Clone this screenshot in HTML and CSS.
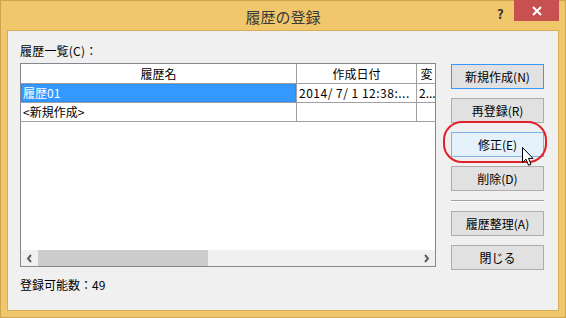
FILE: index.html
```html
<!DOCTYPE html>
<html lang="ja">
<head>
    <meta charset="UTF-8">
    <title>履歴の登録</title>
    <link rel="stylesheet" href="styles.css">
</head>
<body>
    <div class="window">
        <div class="titlebar">
            <span class="title">履歴の登録</span>
            <span class="help">?</span>
            <span class="close">
                <svg width="10" height="10" viewBox="0 0 10 10"><path d="M1 1 L9 9 M9 1 L1 9" stroke="#fff" stroke-width="2"/></svg>
            </span>
        </div>
        <div class="client">
            <div class="left">
                <div class="label">履歴一覧(C)：</div>
                <div class="listview">
                    <div class="lv-row lv-head">
                        <div class="cell">履歴名</div>
                        <div class="cell">作成日付</div>
                        <div class="cell">変</div>
                    </div>
                    <div class="lv-row selected">
                        <div class="cell"><span class="focus">履歴01</span></div>
                        <div class="cell date">2014/ 7/ 1 12:38:...</div>
                        <div class="cell">2...</div>
                    </div>
                    <div class="lv-row">
                        <div class="cell">&lt;新規作成&gt;</div>
                        <div class="cell"></div>
                        <div class="cell"></div>
                    </div>
                    <div class="lv-fill"></div>
                    <div class="hscroll">
                        <span class="arrow">
                            <svg width="7" height="9" viewBox="0 0 7 9"><path d="M5 1 L2 4.5 L5 8" fill="none" stroke="#606060" stroke-width="2"/></svg>
                        </span>
                        <div class="track"><div class="thumb"></div></div>
                        <span class="arrow">
                            <svg width="7" height="9" viewBox="0 0 7 9"><path d="M2 1 L5 4.5 L2 8" fill="none" stroke="#606060" stroke-width="2"/></svg>
                        </span>
                    </div>
                </div>
                <div class="status">登録可能数：49</div>
            </div>
            <div class="buttons">
                <button class="default">新規作成(N)</button>
                <button>再登録(R)</button>
                <button class="hover">修正(E)</button>
                <button>削除(D)</button>
                <div class="separator"></div>
                <button>履歴整理(A)</button>
                <button>閉じる</button>
            </div>
            <div class="highlight"></div>
            <svg class="cursor" width="13" height="20" viewBox="0 0 13 20">
                <path d="M0.5 0.5 L0.5 15.5 L4 12.2 L6.6 18.3 L9 17.3 L6.5 11.4 L11 11.4 Z" fill="#fff" stroke="#000" stroke-width="1"/>
            </svg>
        </div>
    </div>
</body>
</html>
```

FILE: styles.css
```css
body {
    margin: 0;
    font-family: "Noto Sans CJK JP", "Noto Sans", sans-serif;
    font-size: 12px;
    color: #000;
}
.window {
    width: 566px;
    height: 318px;
    box-sizing: border-box;
    background-color: #f0c76b;
    border: 1px solid #cfa34f;
    padding: 0 6px 6px;
    display: flex;
    flex-direction: column;
}
.titlebar {
    height: 29px;
    position: relative;
    display: flex;
    align-items: center;
    justify-content: center;
}
.title {
    font-size: 15px;
    color: #3a3a3a;
    margin-top: 1px;
}
.help {
    position: absolute;
    left: 490px;
    top: 3px;
    font-size: 13px;
    font-weight: bold;
    color: #333;
}
.close {
    position: absolute;
    left: 507px;
    top: -1px;
    width: 45px;
    height: 21px;
    background-color: #c75050;
    display: flex;
    align-items: center;
    justify-content: center;
}
.client {
    flex: 1;
    background-color: #f0f0f0;
    border: 1px solid #d6ad58;
    padding: 12px 0 0 12px;
    display: flex;
    gap: 15px;
    position: relative;
}
.left {
    width: 416px;
}
.label {
    height: 20px;
    line-height: 16px;
    letter-spacing: 0.2px;
}
.listview {
    border: 1px solid #828790;
    background-color: #fff;
}
.lv-row {
    display: grid;
    grid-template-columns: 276px 120px 19px;
    height: 19px;
    border-bottom: 1px solid #a0a0a0;
    box-sizing: border-box;
}
.lv-row .cell {
    border-right: 1px solid #a0a0a0;
    padding: 0 2px;
    line-height: 18px;
    white-space: nowrap;
    overflow: hidden;
}
.lv-row .cell:last-child {
    border-right: none;
}
.lv-row .date {
    letter-spacing: 0.5px;
}
.lv-head {
    height: 20px;
}
.lv-head .cell {
    text-align: center;
    line-height: 19px;
}
.selected .cell:first-child {
    background-color: #3399ff;
    color: #fff;
    padding: 0;
}
.focus {
    display: block;
    height: 18px;
    box-sizing: border-box;
    border: 1px dotted #c06000;
    padding-left: 1px;
    line-height: 16px;
}
.lv-fill {
    height: 128px;
}
.hscroll {
    height: 16px;
    background-color: #f0f0f0;
    display: flex;
    align-items: center;
}
.arrow {
    width: 17px;
    display: flex;
    justify-content: center;
}
.track {
    flex: 1;
    height: 16px;
}
.thumb {
    width: 170px;
    height: 16px;
    background-color: #cdcdcd;
}
.status {
    margin-top: 10px;
    line-height: 16px;
}
.buttons {
    width: 93px;
    margin-top: 21px;
    display: flex;
    flex-direction: column;
    gap: 9px;
}
button {
    height: 25px;
    font-family: inherit;
    font-size: 12px;
    background-color: #e1e1e1;
    border: 1px solid #adadad;
    padding: 0;
    color: #000;
}
button.default {
    border-color: #3399ff;
}
button.hover {
    background-color: #e5f1fb;
    border-color: #7eb4ea;
}
.separator {
    height: 1px;
    background-color: #a0a0a0;
    border-bottom: 1px solid #fff;
    margin: 0;
}
.highlight {
    position: absolute;
    left: 435px;
    top: 90px;
    width: 100px;
    height: 38px;
    border: 2px solid #e0202a;
    border-radius: 19px;
}
.cursor {
    position: absolute;
    left: 514px;
    top: 116px;
}
```
